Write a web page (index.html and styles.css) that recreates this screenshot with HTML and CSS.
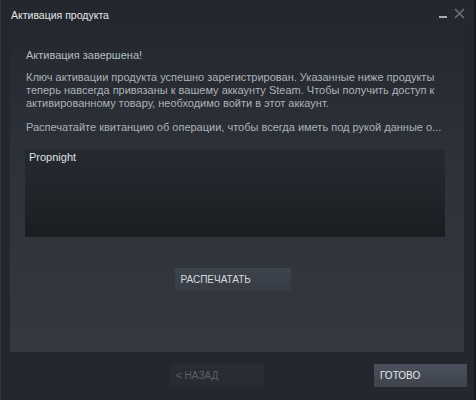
FILE: index.html
```html
<!DOCTYPE html>
<html lang="ru">
<head>
    <meta charset="UTF-8">
    <title>Активация продукта</title>
    <link rel="stylesheet" href="styles.css">
</head>
<body>
    <div class="window">
        <div class="titlebar">
            <span class="title">Активация продукта</span>
            <div class="controls">
                <span class="minimize"></span>
                <svg class="close" width="11" height="11" viewBox="0 0 11 11">
                    <path d="M1 1L10 10M10 1L1 10" stroke="#6b7079" stroke-width="1.6" fill="none"/>
                </svg>
            </div>
        </div>

        <div class="panel">
            <p class="heading">Активация завершена!</p>
            <p class="text">Ключ активации продукта успешно зарегистрирован. Указанные ниже продукты теперь навсегда привязаны к вашему аккаунту Steam. Чтобы получить доступ к активированному товару, необходимо войти в этот аккаунт.</p>
            <p class="text">Распечатайте квитанцию об операции, чтобы всегда иметь под рукой данные о...</p>

            <div class="products">Propnight</div>

            <div class="print-row">
                <button class="btn print">РАСПЕЧАТАТЬ</button>
            </div>
        </div>

        <div class="footer">
            <button class="btn back">&lt; НАЗАД</button>
            <button class="btn done">ГОТОВО</button>
        </div>
    </div>
</body>
</html>
```

FILE: styles.css
```css
html, body {
    margin: 0;
    padding: 0;
    height: 100%;
}

body {
    background: #1c1f25;
    font-family: Arial, "Liberation Sans", sans-serif;
    font-size: 11px;
    color: #acb2b8;
}

.window {
    height: 400px;
    box-sizing: border-box;
    background: #24272e;
    border-left: 1px solid #33373f;
    border-right: 2px solid #1a1c21;
    display: flex;
    flex-direction: column;
}

.titlebar {
    height: 30px;
    display: flex;
    align-items: center;
    justify-content: space-between;
    padding: 0 9px 0 10px;
    flex-shrink: 0;
}

.title {
    color: #e2e4e6;
    font-size: 10.5px;
    margin-top: -1px;
}

.controls {
    display: flex;
    align-items: flex-end;
    gap: 7px;
    margin-top: -3px;
}

.minimize {
    display: block;
    width: 8px;
    height: 2px;
    background: #a9adb3;
    margin-bottom: 1px;
}

.panel {
    margin: 0 10px 0 9px;
    height: 322px;
    box-sizing: border-box;
    padding: 19px 19px 0 16px;
    background: linear-gradient(to bottom, #25282f 0%, #2d3139 40%, #343940 100%);
}

.heading {
    margin: 0 0 9px 0;
    line-height: 13px;
    color: #b6bcc2;
}

.text {
    margin: 0 0 11px 0;
    line-height: 13px;
    color: #acb2b8;
}

.products {
    margin: 14px 0 0 -1px;
    height: 89px;
    box-sizing: border-box;
    padding: 2px 4px;
    background: linear-gradient(to bottom, #26292f 0%, #202328 60%, #1a1c20 100%);
    border-top: 1px solid #2e3138;
    color: #dfe2e5;
}

.print-row {
    display: flex;
    justify-content: center;
    margin-top: 31px;
}

.btn {
    font-family: Arial, "Liberation Sans", sans-serif;
    font-size: 10px;
    border: none;
    text-align: left;
    height: 23px;
    padding: 0 6px;
    cursor: pointer;
}

.print {
    width: 116px;
    background: linear-gradient(to bottom, #3e444e 0%, #363b44 100%);
    color: #d8dbde;
    margin-left: -6px;
}

.footer {
    display: flex;
    padding: 12px 0 0 169px;
}

.back {
    width: 94px;
    background: #282c34;
    color: #5d6168;
}

.done {
    width: 93px;
    margin-left: auto;
    margin-right: 7px;
    background: linear-gradient(to bottom, #4b515c 0%, #3e434c 100%);
    color: #e6e8ea;
}
```
